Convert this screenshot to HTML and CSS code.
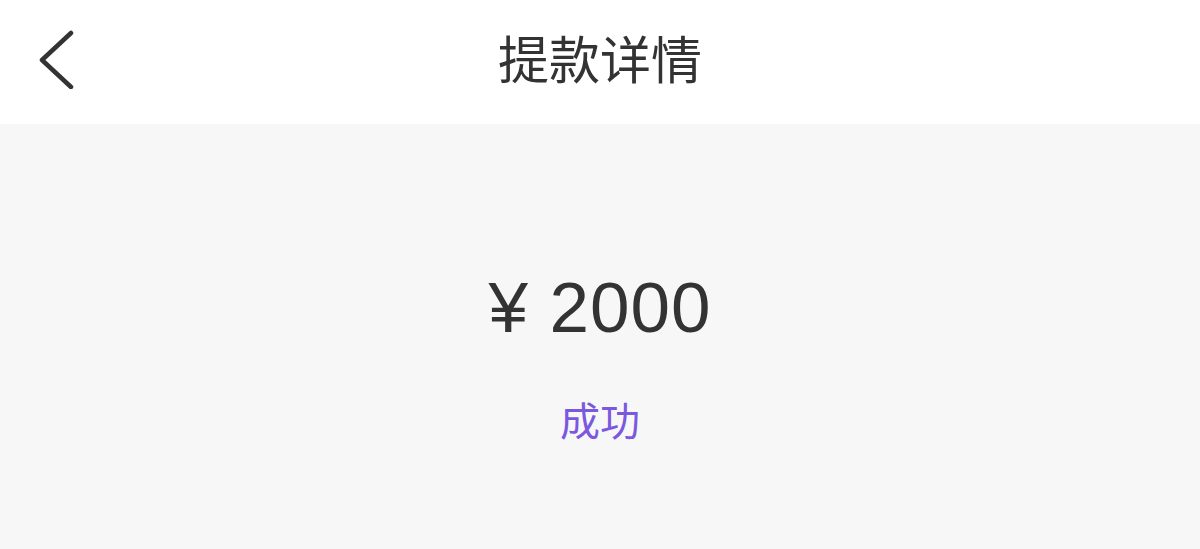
FILE: index.html
```html
<!DOCTYPE html>
<html lang="zh-CN">
<head>
    <meta charset="UTF-8">
    <meta name="viewport" content="width=device-width, initial-scale=1.0">
    <title>提款详情</title>
<link rel="stylesheet" href="styles.css">
</head>
<body>
    <!-- Header -->
    <header class="top-bar">
        <a class="back-btn" href="#">
            <svg width="40" height="60" viewBox="0 0 40 60">
                <polyline points="33,4 4,31 33,58" fill="none" stroke="#333" stroke-width="4.5" stroke-linecap="round" stroke-linejoin="round"/>
            </svg>
        </a>
        <h1 class="title">提款详情</h1>
    </header>

    <!-- Detail -->
    <div class="detail">
        <div class="amount">¥ 2000</div>
        <div class="status">成功</div>
    </div>
</body>
</html>
```

FILE: styles.css
```css
* {
    box-sizing: border-box;
    margin: 0;
    padding: 0;
}

body {
    font-family: "Noto Sans CJK SC", "Noto Sans", sans-serif;
    background-color: #f7f7f7;
    color: #333;
}
.top-bar {
    position: relative;
    height: 124px;
    background-color: #fff;
    display: flex;
    align-items: center;
    justify-content: center;
}
.back-btn {
    position: absolute;
    left: 38px;
    top: 29px;
    display: block;
}
.back-btn svg {
    display: block;
}
.title {
    font-size: 51px;
    font-weight: normal;
    color: #333;
    margin-top: -10px;
}
.detail {
    display: flex;
    flex-direction: column;
    align-items: center;
    padding-top: 142px;
}
.amount {
    font-family: "Liberation Sans", Arial, sans-serif;
    font-size: 71px;
    line-height: 84px;
    letter-spacing: 1px;
    color: #333;
}
.status {
    margin-top: 44px;
    font-size: 40px;
    line-height: 50px;
    color: #7a58df;
}
```
